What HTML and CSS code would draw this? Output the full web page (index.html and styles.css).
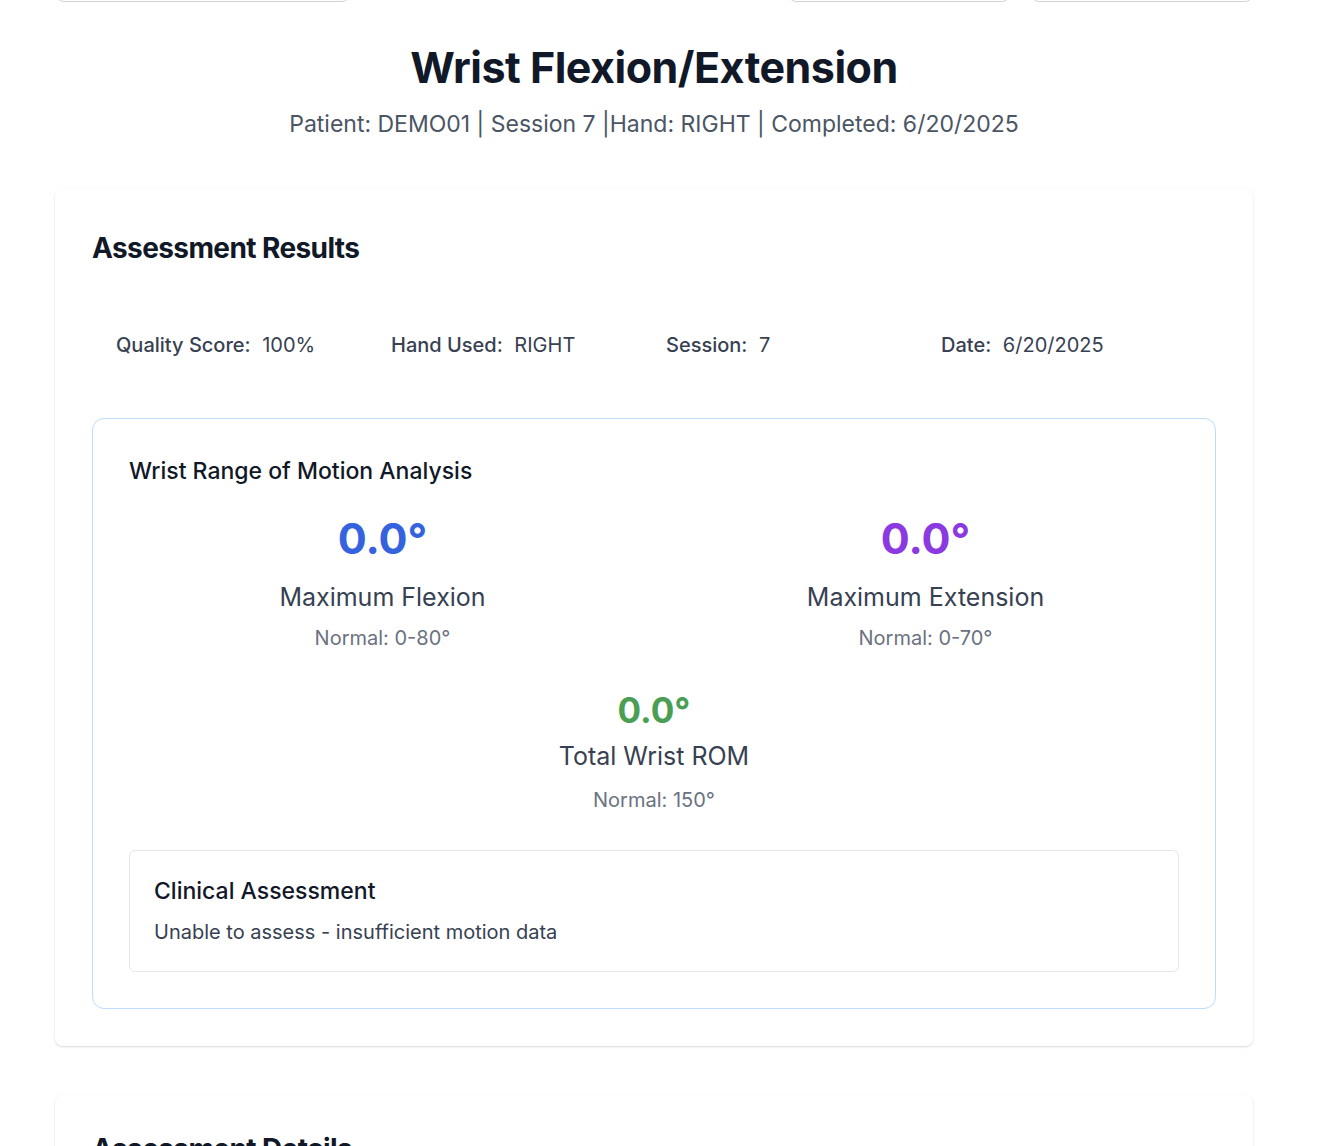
FILE: index.html
```html
<!DOCTYPE html>
<html lang="en">
<head>
<meta charset="utf-8">
<title>Wrist Flexion/Extension</title>
<link rel="stylesheet" href="styles.css">
</head>
<body>
<div class="page">
  <div class="toolbar">
    <button class="btn btn-wide" aria-label="Back"></button>
    <div class="toolbar-right">
      <button class="btn" aria-label="Download"></button>
      <button class="btn" aria-label="Share"></button>
    </div>
  </div>

  <header class="header">
    <h1 class="title">Wrist Flexion/Extension</h1>
    <p class="subtitle">Patient: DEMO01 | Session 7 |Hand: RIGHT | Completed: 6/20/2025</p>
  </header>

  <section class="card">
    <h2 class="card-title">Assessment Results</h2>
    <div class="stats">
      <div class="stat"><span class="stat-label">Quality Score:</span> <span>100%</span></div>
      <div class="stat"><span class="stat-label">Hand Used:</span> <span>RIGHT</span></div>
      <div class="stat"><span class="stat-label">Session:</span> <span>7</span></div>
      <div class="stat"><span class="stat-label">Date:</span> <span>6/20/2025</span></div>
    </div>

    <div class="rom">
      <h3 class="rom-title">Wrist Range of Motion Analysis</h3>
      <div class="rom-grid">
        <div class="metric">
          <div class="metric-value blue">0.0°</div>
          <div class="metric-label">Maximum Flexion</div>
          <div class="metric-normal">Normal: 0-80°</div>
        </div>
        <div class="metric">
          <div class="metric-value purple">0.0°</div>
          <div class="metric-label">Maximum Extension</div>
          <div class="metric-normal">Normal: 0-70°</div>
        </div>
      </div>
      <div class="metric metric-total">
        <div class="metric-value green small">0.0°</div>
        <div class="metric-label">Total Wrist ROM</div>
        <div class="metric-normal">Normal: 150°</div>
      </div>
      <div class="clinical">
        <h4 class="clinical-title">Clinical Assessment</h4>
        <p class="clinical-text">Unable to assess - insufficient motion data</p>
      </div>
    </div>
  </section>

  <section class="card card-next">
    <h2 class="card-title">Assessment Details</h2>
  </section>
</div>
</body>
</html>
```

FILE: styles.css
```css
* { box-sizing: border-box; }

html, body {
  margin: 0;
  padding: 0;
  background: #ffffff;
  font-family: Inter, "Noto Sans", "Liberation Sans", sans-serif;
  color: #111827;
}

.page {
  width: 1198px;
  margin-left: 55px;
}

.toolbar {
  display: flex;
  justify-content: space-between;
  margin-top: -40px;
  height: 42px;
}

.toolbar-right {
  display: flex;
  gap: 21px;
}

.btn {
  height: 42px;
  width: 222px;
  border: 1px solid #d4d2dc;
  border-radius: 8px;
  background: #fff;
  padding: 0;
}

.btn-wide {
  width: 294px;
  margin-left: 1px;
}

.header {
  text-align: center;
  margin-top: 41px;
}

.title {
  margin: 0;
  font-size: 43px;
  line-height: 48px;
  font-weight: 700;
  letter-spacing: -0.5px;
  color: #111827;
}

.subtitle {
  margin: 16px 0 0;
  font-size: 23px;
  line-height: 34px;
  color: #4b5563;
}

.card {
  margin-top: 48px;
  background: #fff;
  border-radius: 8px;
  box-shadow: 0 1px 3px rgba(0,0,0,0.10), 0 1px 2px rgba(0,0,0,0.06);
  padding: 39px 37px 37px;
}

.card-title {
  margin: 0;
  font-size: 28px;
  line-height: 40px;
  font-weight: 700;
  letter-spacing: -0.6px;
  color: #111827;
}

.stats {
  display: grid;
  grid-template-columns: repeat(4, 1fr);
  gap: 24px;
  padding: 24px 24px;
  margin-top: 39px;
  font-size: 20px;
  line-height: 28px;
  color: #374151;
}

.stat-label {
  font-weight: 500;
  margin-right: 6px;
}

.rom {
  margin-top: 35px;
  border: 1px solid #bfdbfe;
  border-radius: 12px;
  padding: 36px 36px 36px;
}

.rom-title {
  margin: 0;
  font-size: 23px;
  line-height: 32px;
  font-weight: 500;
  color: #111827;
}

.rom-grid {
  display: grid;
  grid-template-columns: 1fr 1fr;
  gap: 36px;
  margin-top: 26px;
}

.metric {
  text-align: center;
}

.metric-value {
  font-size: 43px;
  line-height: 50px;
  font-weight: 700;
}

.metric-value.small {
  font-size: 35px;
  line-height: 40px;
}

.blue { color: #3563e0; }
.purple { color: #8a3ae0; }
.green { color: #4a9f55; }

.metric-label {
  margin-top: 17px;
  font-size: 25px;
  line-height: 34px;
  color: #374151;
}

.metric-normal {
  margin-top: 10px;
  font-size: 20px;
  line-height: 28px;
  color: #6b7280;
}

.metric-total {
  margin-top: 38px;
}

.metric-total .metric-label {
  margin-top: 9px;
}

.metric-total .metric-normal {
  margin-top: 13px;
}

.clinical {
  margin-top: 36px;
  border: 1px solid #e5e7eb;
  border-radius: 6px;
  padding: 24px 24px 24px;
}

.clinical-title {
  margin: 0;
  font-size: 23px;
  line-height: 32px;
  font-weight: 500;
  color: #111827;
}

.clinical-text {
  margin: 10px 0 0;
  font-size: 20px;
  line-height: 30px;
  color: #374151;
}

.card-next {
  margin-top: 49px;
  height: 200px;
  padding-top: 34px;
}
```
